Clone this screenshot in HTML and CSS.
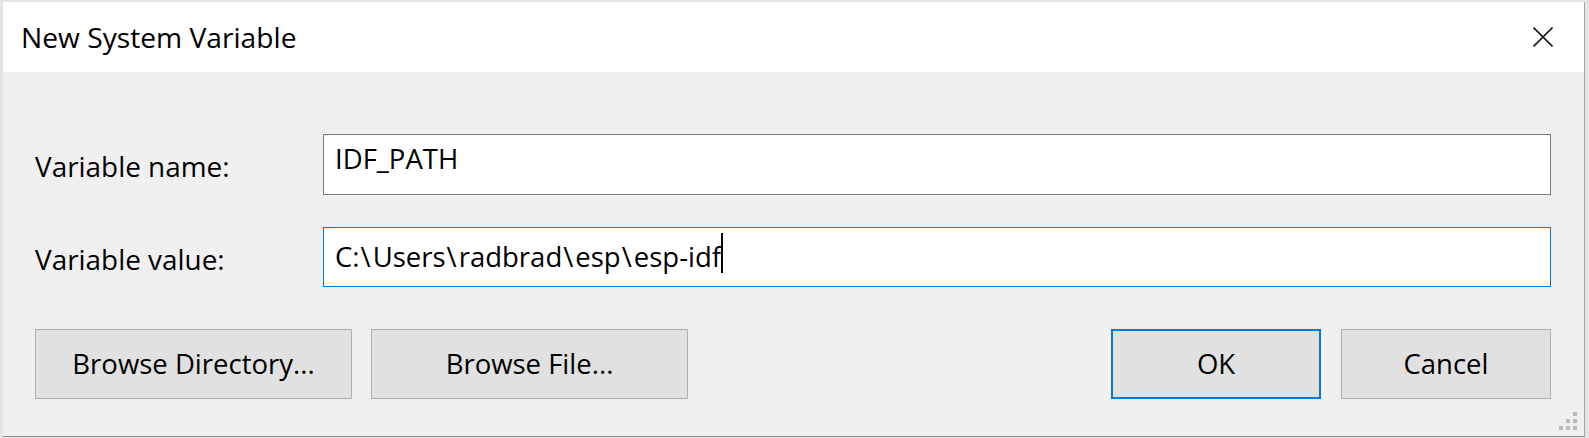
FILE: index.html
```html
<!DOCTYPE html>
<html lang="en">
<head>
<meta charset="utf-8">
<title>New System Variable</title>
<link rel="stylesheet" href="styles.css">
</head>
<body>
<div class="dialog">
  <div class="titlebar">
    <span class="title">New System Variable</span>
    <div class="close" aria-label="Close">
      <svg width="20" height="20" viewBox="0 0 20 20"><path d="M0.5 0.5 L19.5 19.5 M19.5 0.5 L0.5 19.5" stroke="#1a1a1a" stroke-width="1.6" fill="none"/></svg>
    </div>
  </div>
  <div class="content">
    <div class="fields">
      <span class="label">Variable name:</span>
      <div class="field">IDF_PATH</div>
      <span class="label">Variable value:</span>
      <div class="field focused">C:<span class="bs">\</span>Users<span class="bs">\</span>radbrad<span class="bs">\</span>esp<span class="bs">\</span>esp-idf<span class="caret"></span></div>
    </div>
    <div class="buttons">
      <div class="btn wide">Browse Directory...</div>
      <div class="btn wide">Browse File...</div>
      <span class="spacer"></span>
      <div class="btn default">OK</div>
      <div class="btn">Cancel</div>
    </div>
  </div>
  <svg class="grip" width="18" height="18" viewBox="0 0 18 18">
    <rect x="14" y="0" width="4" height="4" fill="#b9b9b9"/>
    <rect x="7" y="7" width="4" height="4" fill="#b9b9b9"/>
    <rect x="14" y="7" width="4" height="4" fill="#b9b9b9"/>
    <rect x="0" y="14" width="4" height="4" fill="#b9b9b9"/>
    <rect x="7" y="14" width="4" height="4" fill="#b9b9b9"/>
    <rect x="14" y="14" width="4" height="4" fill="#b9b9b9"/>
  </svg>
</div>
</body>
</html>
```
FILE: styles.css
```css
html, body {
  margin: 0;
  padding: 0;
  height: 100%;
}
body {
  background: #e4e4e4;
  font-family: "Open Sans", "Noto Sans", sans-serif;
  overflow: hidden;
  color: #000;
}
.dialog {
  position: relative;
  margin: 2px 0 0 3px;
  width: 1582px;
  height: 435px;
  box-sizing: border-box;
  background: #f0f0f0;
  border-right: 1px solid #a3a3a3;
  border-bottom: 1px solid #8c8c8c;
}
.titlebar {
  height: 70px;
  background: #fff;
  display: flex;
  align-items: center;
  justify-content: space-between;
}
.title {
  padding-left: 18px;
  font-size: 28.2px;
  line-height: 38px;
}
.close {
  width: 84px;
  height: 70px;
  display: flex;
  align-items: center;
  justify-content: center;
  margin-right: -1px;
}
.content {
  padding: 62px 33px 0 32px;
}
.fields {
  display: grid;
  grid-template-columns: 288px 1fr;
  row-gap: 32px;
  align-items: center;
}
.label {
  font-size: 27.9px;
  line-height: 38px;
  padding-top: 3px;
}
.field {
  height: 61px;
  box-sizing: border-box;
  border: 1px solid #7a7a7a;
  background: #fff;
  padding: 5px 11px 0;
  font-size: 27.5px;
  line-height: 38px;
  white-space: nowrap;
}
.field.focused {
  height: 60px;
  border-color: #0078d7;
}
.bs {
  margin: 0 2px 0 1px;
}
.caret {
  display: inline-block;
  width: 1.5px;
  height: 40px;
  background: #000;
  vertical-align: -6px;
}
.buttons {
  display: flex;
  gap: 20px;
  margin-top: 42px;
}
.btn {
  height: 70px;
  width: 210px;
  box-sizing: border-box;
  background: #e1e1e1;
  border: 1px solid #adadad;
  font-size: 27.5px;
  line-height: 38px;
  display: flex;
  align-items: center;
  justify-content: center;
}
.btn.wide {
  width: 317px;
}
.btn.wide + .btn.wide {
  margin-left: -1px;
}
.btn.default {
  border: 2px solid #0078d7;
}
.spacer {
  flex: 1;
}
.grip {
  position: absolute;
  right: 7px;
  bottom: 6px;
}
```
